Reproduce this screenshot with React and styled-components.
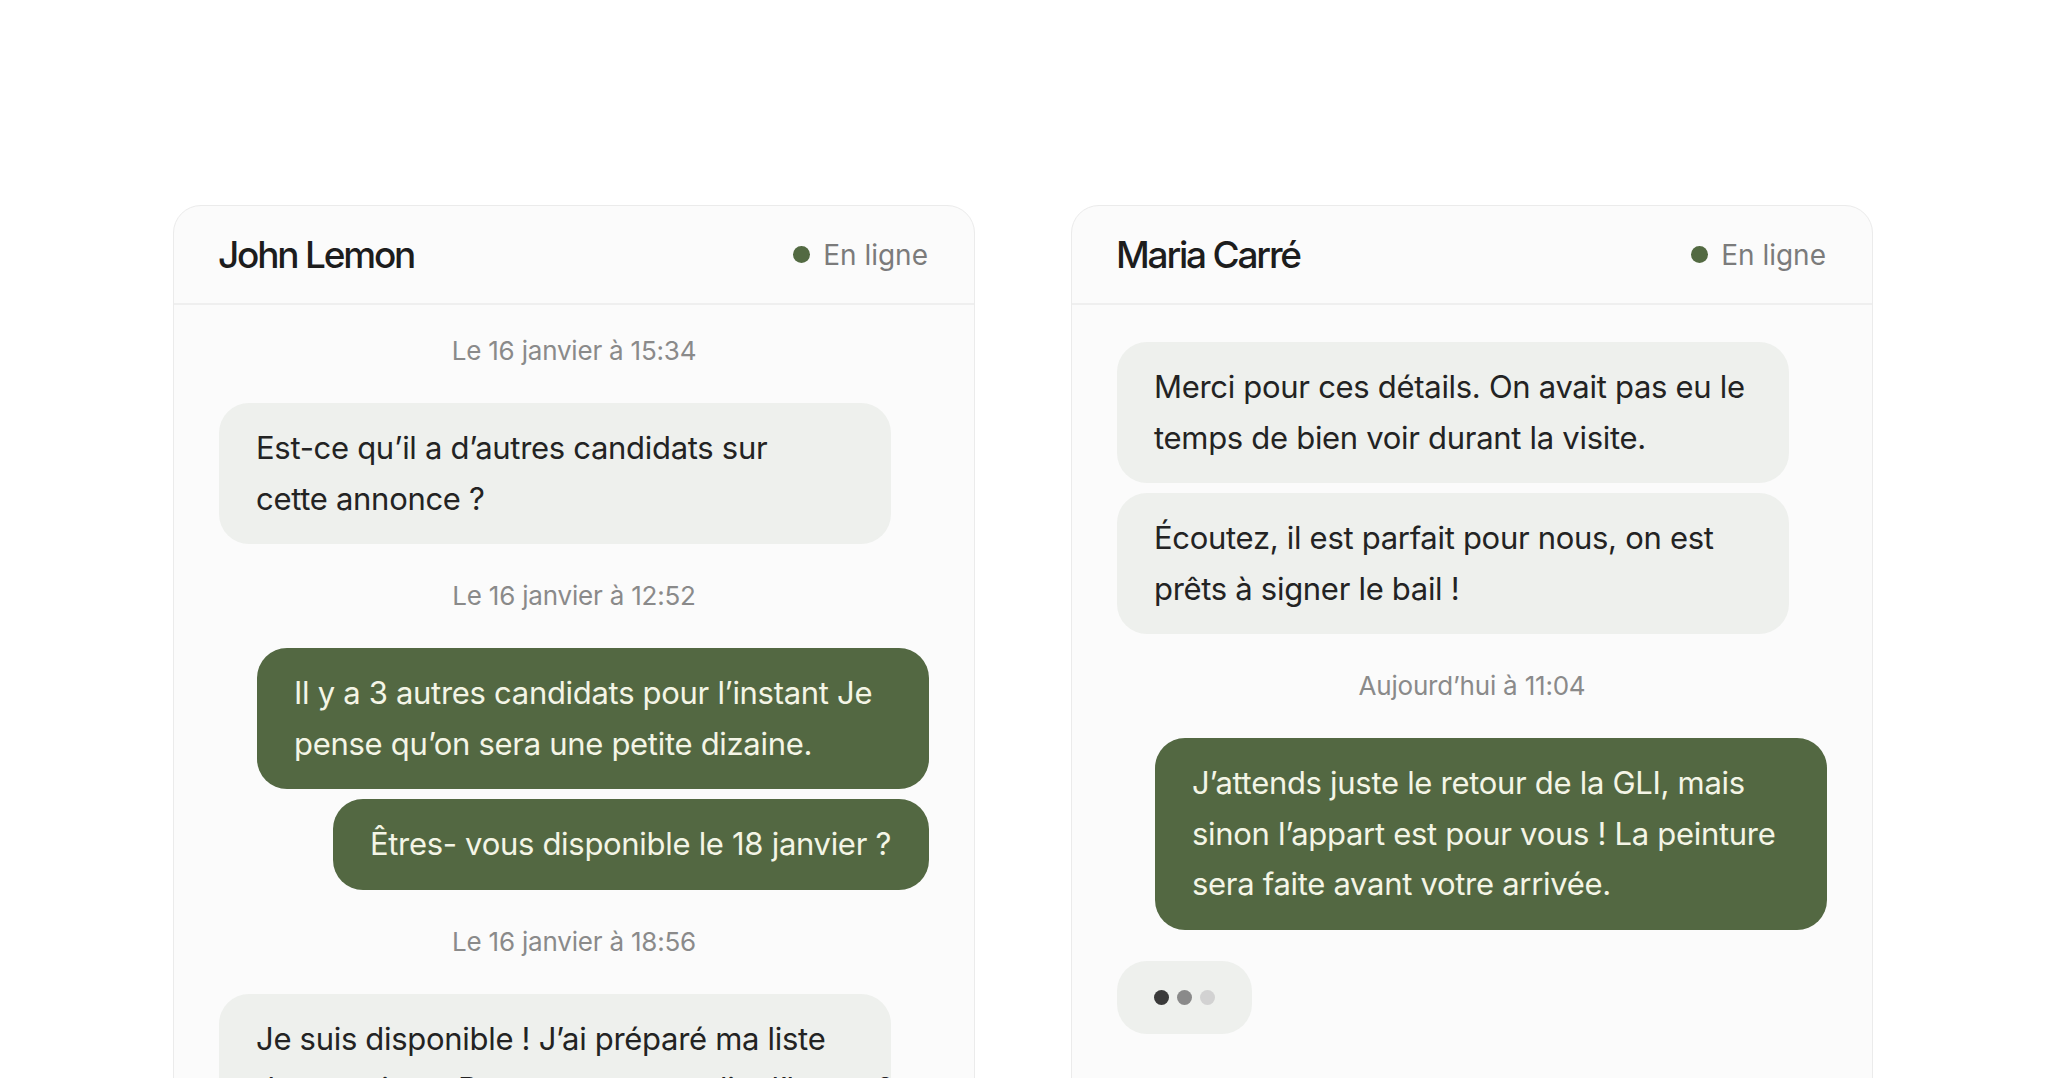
import React from 'react';
import styled, { createGlobalStyle } from 'styled-components';

const GlobalStyle = createGlobalStyle`
    html, body {
        margin:0;
        padding:0;
        background:#ffffff;
        height:100%;
        overflow:hidden;
    }
    body {
        font-family: Inter, "Noto Sans", "Liberation Sans", sans-serif;
        -webkit-font-smoothing: antialiased;
    }
`;

const StyledPage = styled.main`
    display:flex;
    align-items:flex-start;
    gap:96px;
    padding:205px 0 0 173px;
    height:1078px;
    box-sizing:border-box;
    overflow:hidden;
`;
const StyledCard = styled.section`
    width:802px;
    height:960px;
    flex-shrink:0;
    box-sizing:border-box;
    background:#fbfbfb;
    border:1.5px solid #ebebeb;
    border-radius:28px 28px 0 0;
    display:flex;
    flex-direction:column;
    overflow:hidden;
`;
const StyledHeader = styled.header`
    height:99px;
    flex-shrink:0;
    box-sizing:border-box;
    display:flex;
    align-items:center;
    justify-content:space-between;
    padding:0 46px 0 44px;
    border-bottom:2px solid #efefef;
`;
const StyledName = styled.h2`
    margin:0;
    font-size:37px;
    font-weight:500;
    letter-spacing:-2.2px;
    color:#1d1d1d;
`;
const StyledStatus = styled.div`
    display:flex;
    align-items:center;
    gap:13px;
    font-size:28px;
    letter-spacing:0;
    color:#7b7b7b;
    &::before{
        content:"";
        width:17px;
        height:17px;
        border-radius:50%;
        background:#536a42;
    }
`;
const StyledBody = styled.div`
    flex:1;
    display:flex;
    flex-direction:column;
    gap:10px;
    padding:${({$top})=>$top}px 45px 0;
    overflow:hidden;
`;
const StyledStamp = styled.div`
    text-align:center;
    font-size:26px;
    line-height:36px;
    letter-spacing:-0.2px;
    color:#8a8a8a;
    margin:24px 0;
`;
const StyledBubble = styled.div`
    align-self:${({$sent})=>$sent ? 'flex-end' : 'flex-start'};
    width:${({$wide})=>$wide ? '672px' : 'fit-content'};
    box-sizing:border-box;
    padding:20px 38px 20px 37px;
    border-radius:30px;
    font-size:31px;
    line-height:50.5px;
    letter-spacing:-0.3px;
    white-space:nowrap;
    background:${({$sent})=>$sent ? '#536842' : '#eef0ed'};
    color:${({$sent})=>$sent ? '#f4f5e6' : '#232323'};
`;
const StyledTyping = styled.div`
    align-self:flex-start;
    margin-top:21px;
    display:flex;
    align-items:center;
    gap:8px;
    padding:29px 37px;
    border-radius:30px;
    background:#eef0ed;
`;
const StyledDot = styled.span`
    width:15px;
    height:15px;
    border-radius:50%;
    background:${({$tone})=>$tone};
`;

const Card = ({name, top, children}) => (
    <StyledCard>
        <StyledHeader>
            <StyledName>{name}</StyledName>
            <StyledStatus>En ligne</StyledStatus>
        </StyledHeader>
        <StyledBody $top={top}>{children}</StyledBody>
    </StyledCard>
);

export default function App(){
    return(
        <>
            <GlobalStyle/>
            <StyledPage>
                <Card name="John Lemon" top={4}>
                    <StyledStamp>Le 16 janvier à 15:34</StyledStamp>
                    <StyledBubble $wide>Est-ce qu’il a d’autres candidats sur<br/>cette annonce ?</StyledBubble>
                    <StyledStamp>Le 16 janvier à 12:52</StyledStamp>
                    <StyledBubble $sent $wide>Il y a 3 autres candidats pour l’instant Je<br/>pense qu’on sera une petite dizaine.</StyledBubble>
                    <StyledBubble $sent>Êtres- vous disponible le 18 janvier ?</StyledBubble>
                    <StyledStamp>Le 16 janvier à 18:56</StyledStamp>
                    <StyledBubble $wide>Je suis disponible ! J’ai préparé ma liste<br/>de questions. Pouvez-vous me dire l’heure ?</StyledBubble>
                </Card>
                <Card name="Maria Carré" top={37}>
                    <StyledBubble $wide>Merci pour ces détails. On avait pas eu le<br/>temps de bien voir durant la visite.</StyledBubble>
                    <StyledBubble $wide>Écoutez, il est parfait pour nous, on est<br/>prêts à signer le bail !</StyledBubble>
                    <StyledStamp>Aujourd’hui à 11:04</StyledStamp>
                    <StyledBubble $sent $wide>J’attends juste le retour de la GLI, mais<br/>sinon l’appart est pour vous ! La peinture<br/>sera faite avant votre arrivée.</StyledBubble>
                    <StyledTyping>
                        <StyledDot $tone="#3a3a3a"/>
                        <StyledDot $tone="#8a8a8a"/>
                        <StyledDot $tone="#d2d2d2"/>
                    </StyledTyping>
                </Card>
            </StyledPage>
        </>
    );
}
